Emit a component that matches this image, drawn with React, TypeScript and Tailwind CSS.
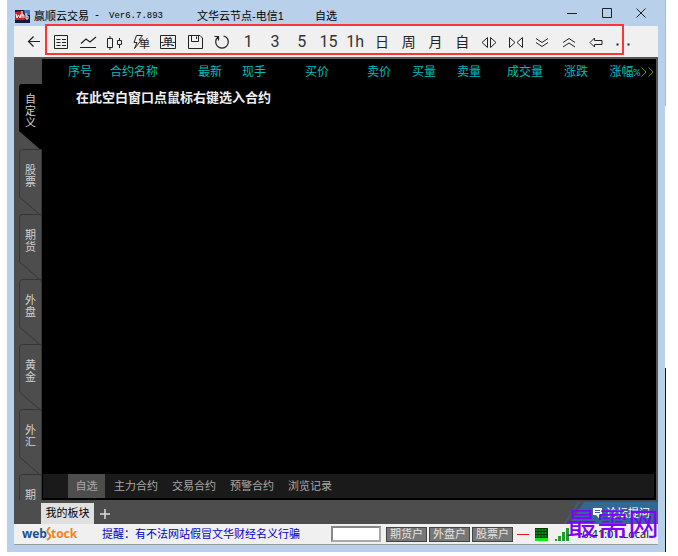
import type { ReactNode } from "react";

function Icon({ children }: { children: ReactNode }) {
  return (
    <svg width="20" height="20" viewBox="0 0 20 20" fill="none" stroke="#222" strokeWidth="1" aria-hidden="true">
      {children}
    </svg>
  );
}

const digit = "text-[16px] leading-5 font-normal text-[#333]";
const hanzi = "text-[14px] leading-5 font-normal text-[#222]";

const tools: { name: string; icon: ReactNode }[] = [
  { name: "返回", icon: <Icon><path d="M16 9.500H4.500M9.500 4.500L4.500 9.500L9.500 14.500" strokeWidth="1.200" /></Icon> },
  {
    name: "报价",
    icon: (
      <Icon>
        <path d="M3.500 3.500h13v13h-13zM5.500 7.500h4M11 7.500h4M5.500 10.500h4M11 10.500h4M5.500 13.500h4M11 13.500h4" />
      </Icon>
    ),
  },
  { name: "分时", icon: <Icon><path d="M2 15.500h16M3 11.500L8 7L12 10L18 5" strokeWidth="1.200" /></Icon> },
  {
    name: "K线",
    icon: (
      <Icon>
        <path d="M2.500 6.500h5v9h-5zM5 4v2.500M5 15.500V18M12.500 8.500h4v4h-4zM14.500 6v2.500M14.500 12.500V16" />
      </Icon>
    ),
  },
  {
    name: "闪电下单",
    icon: (
      <Icon>
        <path d="M5.500 3.500h6L8 8h2.500L3.500 16.500L6 10.500H3L5.500 3.500" />
        <text x="8" y="16" fontSize="11" fontWeight="400" fill="#222" stroke="none">单</text>
      </Icon>
    ),
  },
  {
    name: "画线下单",
    icon: (
      <Icon>
        <path d="M2.500 3.500h15v13h-15zM3 10.500h2.500M14.500 10.500H17M4 13.500h2.500M13.500 13.500H16" />
        <text x="5" y="14" fontSize="10" fontWeight="500" fill="#222" stroke="none">单</text>
      </Icon>
    ),
  },
  { name: "保存", icon: <Icon><path d="M3.500 3.500H15L17.500 6v10.500h-14zM6.500 3.500v6h7v-6M11.500 4.500v2.500" /></Icon> },
  {
    name: "刷新",
    icon: <Icon><path d="M6 5A6.300 6.300 0 1 0 14 5M2.500 4.500H6.500V8.500M14 5L11.500 4" strokeWidth="1.200" /></Icon>,
  },
  { name: "1分钟", icon: <span className={digit}>1</span> },
  { name: "3分钟", icon: <span className={digit}>3</span> },
  { name: "5分钟", icon: <span className={digit}>5</span> },
  { name: "15分钟", icon: <span className={digit}>15</span> },
  { name: "1小时", icon: <span className={digit}>1h</span> },
  { name: "日线", icon: <span className={hanzi}>日</span> },
  { name: "周线", icon: <span className={hanzi}>周</span> },
  { name: "月线", icon: <span className={hanzi}>月</span> },
  { name: "自定周期", icon: <span className={hanzi}>自</span> },
  { name: "放宽", icon: <Icon><path d="M8.500 5.500v10L3 10.500zM11.500 5.500v10L17 10.500z" /></Icon> },
  { name: "收窄", icon: <Icon><path d="M3.500 5.500v10L9 10.500zM16.500 5.500v10L11 10.500z" /></Icon> },
  { name: "向下", icon: <Icon><path d="M4 6.500L10 10.500L16 6.500M4 10.500L10 14.500L16 10.500" /></Icon> },
  { name: "向上", icon: <Icon><path d="M4 10.500L10 6.500L16 10.500M4 15L10 11L16 15" /></Icon> },
  { name: "后退", icon: <Icon><path d="M4 10.500L8.500 6v2.500H16v4H8.500V15z" /></Icon> },
  {
    name: "更多",
    icon: <Icon><path d="M3.500 12.500h2M9 12.500h2M14.500 12.500h2" strokeWidth="2" /></Icon>,
  },
];

const columns = [
  { label: "序号", cls: "w-[50px] text-right" },
  { label: "合约名称", cls: "w-[86px] pl-[18px] text-left" },
  { label: "最新", cls: "w-[44px] text-right" },
  { label: "现手", cls: "w-[44px] text-right" },
  { label: "买价", cls: "w-[63px] text-right" },
  { label: "卖价", cls: "w-[62px] text-right" },
  { label: "买量", cls: "w-[45px] text-right" },
  { label: "卖量", cls: "w-[45px] text-right" },
  { label: "成交量", cls: "w-[62px] text-right" },
  { label: "涨跌", cls: "w-[45px] text-right" },
];

const sideTabs = ["自定义", "股票", "期货", "外盘", "黄金", "外汇", "期"];
const pageTabs = ["主力合约", "交易合约", "预警合约", "浏览记录"];
const accounts = ["期货户", "外盘户", "股票户"];

function TitleBar() {
  return (
    <header className="flex h-[26px] shrink-0 items-start pl-px text-[11px] leading-4 text-black">
      <svg className="mt-[10px] mr-1 shrink-0" width="15" height="13" viewBox="0 0 15 13" aria-hidden="true">
        <path d="M0 0h15v13H0z" fill="#15183c" />
        <path d="M0 2l8-1 2 9H0z" fill="#d5201c" />
        <path d="M9 0h6v5h-5z" fill="#3f78c4" />
        <path d="M1 4l1 4 1.500-3L5 8l1-4M7 1v7M7 5h2v3M11 3v6h2V6h-2" fill="none" stroke="#fff" />
      </svg>
      <h1 className="mt-2 flex grow items-center font-normal">
        <span className="w-[60px]">赢顺云交易</span>
        <span className="w-[15px] font-['Liberation_Mono'] text-[10px]">-</span>
        <span className="w-[88px] font-['Liberation_Mono'] text-[9px]">Ver6.7.893</span>
        <span className="w-[118px]">文华云节点-电信1</span>
        <span>自选</span>
      </h1>
      <div className="flex">
        <button aria-label="最小化" className="flex h-[26px] w-[36px] items-center justify-center">
          <svg width="10" height="10" viewBox="0 0 10 10" stroke="#222"><path d="M0 5.500h10" /></svg>
        </button>
        <button aria-label="最大化" className="flex h-[26px] w-[34px] items-center justify-center">
          <svg width="10" height="10" viewBox="0 0 10 10" fill="none" stroke="#222"><path d="M.5.5h9v9h-9z" /></svg>
        </button>
        <button aria-label="关闭" className="flex h-[26px] w-[34px] items-center justify-center">
          <svg width="10" height="10" viewBox="0 0 10 10" stroke="#222"><path d="M.5.5l9 9M9.500.5l-9 9" /></svg>
        </button>
      </div>
    </header>
  );
}

function Toolbar() {
  return (
    <div className="relative shrink-0 border-b-2 border-[#555] bg-[#f0f0f0] pr-[22px] pl-[7px]">
      <nav aria-label="工具栏" className="grid h-[31px] auto-cols-fr grid-flow-col items-center font-['Roboto','Noto_Sans_CJK_SC',sans-serif]">
        {tools.map((t) => (
          <button key={t.name} aria-label={t.name} className="flex items-center justify-center">
            {t.icon}
          </button>
        ))}
      </nav>
      <div className="pointer-events-none absolute -top-0.5 right-[34px] bottom-0.5 left-[31px] border-2 border-[#ff3434]" />
    </div>
  );
}

function SideTab({ label, active }: { label: string; active: boolean }) {
  return (
    <button className={`relative ml-[5px] flex h-[65px] w-[23px] shrink-0 flex-col items-center ${active ? "pt-[9px]" : "pt-[15px]"} text-[11px] leading-3 text-[#d0d0d0]`}>
      <svg className="absolute top-0 left-0" width="23" height="68" viewBox="0 0 23 68" aria-hidden="true">
        {active ? (
          <path d="M23 0H3Q0 0 0 3V47L23 67Z" fill="#000" />
        ) : (
          <path d="M23 .5H3.500Q.5.500.5 3.500V48L22.500 67M22.500 .5V67" fill="none" stroke="#363636" />
        )}
      </svg>
      {label.split("").map((c) => (
        <span key={c} className="relative">{c}</span>
      ))}
    </button>
  );
}

function QuotePane() {
  return (
    <main className="flex min-w-0 grow flex-col border-r-2 border-[#555] bg-black pr-0.5 pb-0.5 pl-px">
      <table className="-ml-px w-full table-fixed border-collapse text-[12px] leading-4 text-[#00bcbc]">
        <thead>
          <tr className="h-[26px]">
            {columns.map((c) => (
              <th key={c.label} className={`${c.cls} font-normal whitespace-nowrap`}>{c.label}</th>
            ))}
            <th className="w-[52px] text-right font-normal whitespace-nowrap">
              涨幅<span className="font-['Liberation_Mono'] text-[11px]">%</span>
            </th>
            <th className="w-[14px] font-normal">
              <button aria-label="更多列" className="flex">
                <svg width="14" height="12" viewBox="0 0 14 12" fill="none" stroke="#8c8400">
                  <path d="M1.500 1.500L6 6L1.500 10.500M8.500 1.500L13 6L8.500 10.500" />
                </svg>
              </button>
            </th>
          </tr>
        </thead>
      </table>
      <p className="mt-[3px] pl-[33px] text-[13px] leading-5 font-bold text-[#f0f0f0]">在此空白窗口点鼠标右键选入合约</p>
      <div className="mt-auto flex h-6 items-stretch bg-[#1a1a1a] pl-[25px] text-[11px] text-[#a8a8a8]">
        <button className="mr-0.5 w-[37px] bg-[#4d4d4d] whitespace-nowrap">自选</button>
        {pageTabs.map((t) => (
          <button key={t} className="px-[7px] whitespace-nowrap">{t}</button>
        ))}
      </div>
    </main>
  );
}

function BoardBar() {
  return (
    <div className="flex h-6 shrink-0 items-end bg-[#4d4d4d] pl-[27px] text-[11px]">
      <button className="h-[21px] w-[53px] bg-[#e0e0e0] whitespace-nowrap text-black">我的板块</button>
      <button aria-label="新建板块" className="flex h-[21px] w-[22px] items-center justify-center">
        <svg width="10" height="10" viewBox="0 0 10 10" stroke="#ddd" strokeWidth="1.500"><path d="M5 0v10M0 5h10" /></svg>
      </button>
      <div className="ml-auto flex h-[22px]">
        <svg width="32" height="22" viewBox="0 0 32 22" aria-hidden="true">
          <path d="M14 0h2L1 22H0z" fill="#316894" />
          <path d="M20 0h12v22H5z" fill="#316894" />
        </svg>
        <button className="flex items-center bg-[#316894] pr-2 whitespace-nowrap text-white">
          <svg className="mr-0.5 -ml-1" width="12" height="12" viewBox="0 0 12 12" aria-hidden="true">
            <path d="M1 1h9v7H7v3L4 8H1z" fill="#fff" />
            <path d="M3 3.500h5M3 5.500h5" stroke="#316894" />
          </svg>
          论坛提问
        </button>
      </div>
    </div>
  );
}

function StatusBar() {
  return (
    <footer className="relative flex h-[21px] shrink-0 items-center border-b border-[#999] bg-[#f0f0f0] pl-2 text-[11px] whitespace-nowrap">
      <div className="flex w-20 items-center font-['Open_Sans'] text-[12px] font-bold">
        <span className="text-[#1c4f8c]">web</span>
        <svg className="-mx-px" width="6" height="14" viewBox="0 0 6 14" aria-hidden="true">
          <path d="M4 0C1 3 .5 5 3 7S4 11 1 13" fill="none" stroke="#f58220" strokeWidth="2" />
        </svg>
        <span className="text-[#f58220]">tock</span>
      </div>
      <p className="text-[#0000cc]">提醒：有不法网站假冒文华财经名义行骗</p>
      <div className="ml-auto flex items-center">
        <input aria-label="合约代码" className="mr-[5px] h-4 w-[50px] border-2 border-t-[#888] border-r-[#aaa] border-b-[#aaa] border-l-[#888] bg-white px-0.5" />
        <div className="flex gap-0.5">
          {accounts.map((a) => (
            <button key={a} className="h-[15px] w-[41px] border border-[#444] bg-[#777] text-center leading-3 text-[#e4e4e4]">{a}</button>
          ))}
        </div>
        <svg className="ml-1" width="12" height="3" viewBox="0 0 12 3" aria-hidden="true"><path d="M0 1.500h12" stroke="#f01010" /></svg>
        <svg className="ml-1.5" width="13" height="13" viewBox="0 0 13 13" aria-hidden="true">
          <path d="M0 0h13v13H0z" fill="#063c06" />
          <path d="M1.500 1v9M4.500 1v9M7.500 1v9M10.500 1v9" stroke="#0b8a14" strokeWidth="2" />
          <path d="M0 3.500h13M0 6.500h13M0 9.500h13" stroke="#063c06" />
          <path d="M0 10h13v3H0z" fill="#12e812" />
        </svg>
        <svg className="ml-[7px]" width="14" height="13" viewBox="0 0 14 13" aria-hidden="true">
          <path d="M0 11h2v2H0zM3 8h3v5H3zM7 4h3v9H7zM11 0h3v13h-3z" fill="#279a32" />
        </svg>
        <time className="w-[80px] text-right font-['Open_Sans']">10:41:01 Local</time>
        <span className="w-[9px]" />
      </div>
      <div className="pointer-events-none absolute -right-px bottom-0.5 text-[31px] leading-[34px] text-[#8000ff]">最需网</div>
    </footer>
  );
}

export default function App() {
  return (
    <div className="flex h-screen bg-white pr-3 pb-1 pl-[7px] font-['Liberation_Sans','Noto_Sans_CJK_SC',sans-serif]">
      <div className="flex min-w-0 grow flex-col bg-[#b9d0ea] px-[7px] pb-[7px]">
        <TitleBar />
        <Toolbar />
        <div className="flex min-h-0 grow">
          <aside className="flex w-7 shrink-0 flex-col overflow-hidden bg-[#4d4d4d] pt-[25px]">
            {sideTabs.map((t, i) => (
              <SideTab key={t} label={t} active={i === 0} />
            ))}
          </aside>
          <QuotePane />
        </div>
        <BoardBar />
        <StatusBar />
      </div>
      <div className="flex w-px shrink-0 flex-col">
        <div className="h-[106px] bg-[#a4bce6]" />
        <div className="mt-[262px] h-[184px] bg-[#101c30]" />
      </div>
    </div>
  );
}
